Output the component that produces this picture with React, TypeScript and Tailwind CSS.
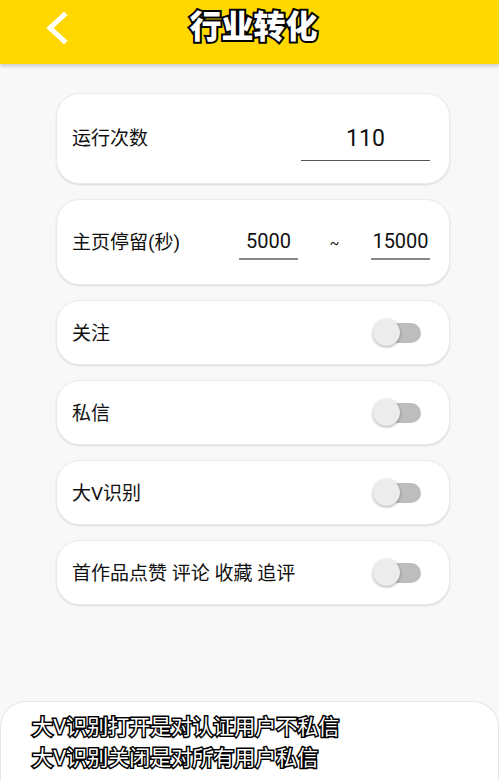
import React from "react";

const outline = "[-webkit-text-stroke:3px_#000] [paint-order:stroke_fill]";

function Toggle() {
  return (
    <div className="relative w-[48px] h-[28px] flex items-center">
      <div className="absolute right-0 w-[34px] h-[20px] rounded-full bg-[#bdbdbd]" />
      <div className="absolute left-0 w-[27px] h-[27px] rounded-full bg-[#ececec] shadow-[0_1px_3px_rgba(0,0,0,0.35)]" />
    </div>
  );
}

function Card({ children, h }: { children: React.ReactNode; h: string }) {
  return (
    <div
      className={`${h} w-[394px] ml-[56px] bg-white rounded-[24px] border border-[#ebebeb] shadow-[0_1px_2px_rgba(0,0,0,0.12)] flex items-center pl-[15px]`}
    >
      {children}
    </div>
  );
}

export default function App() {
  const toggles = ["关注", "私信", "大V识别", "首作品点赞 评论 收藏 追评"];

  return (
    <div
      className="h-[780px] w-[499px] bg-[#f8f8f8] flex flex-col overflow-hidden"
      style={{ fontFamily: "Roboto, 'Noto Sans CJK SC', sans-serif" }}
    >
      <div className="h-[64px] bg-[#ffd800] shadow-[0_2px_4px_rgba(0,0,0,0.2)] relative shrink-0 pt-[5px]">
        <svg className="absolute left-[44px] top-[11px]" width="26" height="34" viewBox="0 0 26 34">
          <path d="M20 4 L6 17 L20 30" fill="none" stroke="#fff" strokeWidth="5" strokeLinecap="square" />
        </svg>
        <div
          className="w-full text-center text-white font-black text-[32px] leading-[1.2] pl-[8px] [-webkit-text-stroke:4px_#000] [paint-order:stroke_fill]"
          style={{ fontFamily: "'Noto Sans CJK SC', sans-serif" }}
        >
          行业转化
        </div>
      </div>

      <div className="flex flex-col gap-[15px] mt-[29px] text-[19px] text-[#111]">
        <Card h="h-[91px]">
          <span className="flex-1 pt-[2px]">运行次数</span>
          <div className="w-[129px] mr-[19px] mt-[6px] border-b border-[#555] text-center text-[23px] pb-[4px]">
            110
          </div>
        </Card>
        <Card h="h-[86px]">
          <span className="flex-1 pt-[2px]">主页停留(秒)</span>
          <div className="w-[59px] border-b-2 border-[#888] text-center text-[20px] pb-[2px] mt-[2px]">5000</div>
          <span className="w-[73px] text-center text-[14px] mt-[2px]">~</span>
          <div className="w-[59px] mr-[19px] border-b-2 border-[#888] text-center text-[20px] pb-[2px] mt-[2px]">15000</div>
        </Card>
        {toggles.map((t) => (
          <Card key={t} h="h-[65px]">
            <span className="flex-1 pt-[3px]">{t}</span>
            <div className="mr-[28px]">
              <Toggle />
            </div>
          </Card>
        ))}
      </div>

      <div className="flex-1" />

      <div className="h-[79px] bg-white rounded-t-[26px] border border-b-0 border-[#e6e6e6] pl-[31px] pt-[10px]">
        <div className={`text-white text-[21px] leading-[31px] ${outline} [-webkit-text-stroke:2.5px_#000]`}>
          <div>大V识别打开是对认证用户不私信</div>
          <div>大V识别关闭是对所有用户私信</div>
        </div>
      </div>
    </div>
  );
}
